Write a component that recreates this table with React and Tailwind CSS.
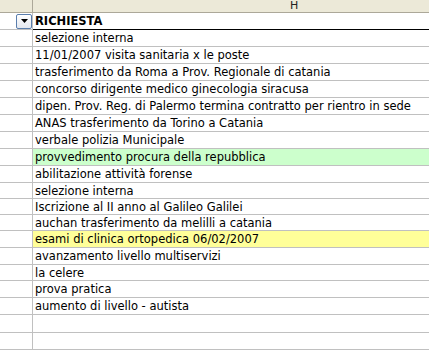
import React from 'react';

const rows = [
  { text: 'selezione interna', h: 17 },
  { text: '11/01/2007 visita sanitaria x le poste', h: 17 },
  { text: 'trasferimento da Roma a Prov. Regionale di catania', h: 17 },
  { text: 'concorso dirigente medico ginecologia siracusa', h: 17 },
  { text: 'dipen. Prov. Reg. di Palermo termina contratto per rientro in sede', h: 17 },
  { text: 'ANAS trasferimento da Torino a Catania', h: 17 },
  { text: 'verbale polizia Municipale', h: 17 },
  { text: 'provvedimento procura della repubblica', h: 17, bg: 'green' },
  { text: 'abilitazione attività forense', h: 17 },
  { text: 'selezione interna', h: 16 },
  { text: 'Iscrizione al II anno al Galileo Galilei', h: 16 },
  { text: 'auchan trasferimento da melilli a catania', h: 16 },
  { text: 'esami di clinica ortopedica 06/02/2007', h: 17, bg: 'yellow' },
  { text: 'avanzamento livello multiservizi', h: 17 },
  { text: 'la celere', h: 16 },
  { text: 'prova pratica', h: 17 },
  { text: 'aumento di livello - autista', h: 17 },
  { text: '', h: 18 },
  { text: '', h: 17 },
  { text: '', h: 17 },
];

const App = () => {
  return (
    <div className="w-[429px] h-[350px] overflow-hidden bg-white text-[11.5px] text-black" style={{ fontFamily: '"DejaVu Sans", sans-serif' }}>
      {/* column header */}
      <div className="flex h-[13px] bg-[#ECE9D8] border-b border-[#ACA899]">
        <div className="w-[33px] shrink-0 border-r border-[#ACA899]" />
        <div className="flex-1 pl-[257px] leading-[12px] text-[11px] text-[#222]">H</div>
      </div>

      {/* filter row */}
      <div className="flex h-[17px]">
        <div className="w-[33px] shrink-0 border-r border-b border-[#C0C0C0] flex items-center justify-end">
          <div className="w-[16px] h-[15px] border border-[#5A7EAD] rounded-[2px] bg-gradient-to-b from-white to-[#E4E8F0] flex items-center justify-center">
            <svg width="7" height="4" viewBox="0 0 7 4">
              <polygon points="0,0 7,0 3.5,4" fill="#000" />
            </svg>
          </div>
        </div>
        <div className="flex-1 border-b border-black pl-[2px] font-bold leading-[16px]">RICHIESTA</div>
      </div>

      {rows.map((r, i) => (
        <div key={i} className={`flex ${r.h === 16 ? 'h-[16px]' : r.h === 18 ? 'h-[18px]' : 'h-[17px]'}`}>
          <div className="w-[33px] shrink-0 border-r border-b border-[#C0C0C0]" />
          <div
            className={`flex-1 border-b border-[#C0C0C0] pl-[2px] leading-[16px] whitespace-nowrap overflow-hidden ${
              r.bg === 'green' ? 'bg-[#CCFFCC]' : r.bg === 'yellow' ? 'bg-[#FFFF99]' : ''
            }`}
          >
            {r.text}
          </div>
        </div>
      ))}
    </div>
  );
};

export default App;
